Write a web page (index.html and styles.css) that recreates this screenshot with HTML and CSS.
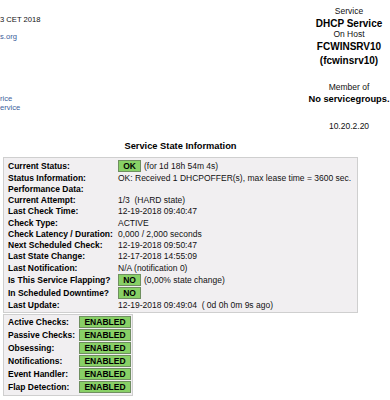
FILE: index.html
```html
<!DOCTYPE html>
<html>
<head>
<meta charset="utf-8">
<link rel="stylesheet" href="styles.css">
</head>
<body>
<div class="top">
  <div class="info">
    <div class="info-date">3 CET 2018</div>
    <div class="info-link link">s.org</div>
    <div class="info-links">
      <div class="link">rice</div>
      <div class="link">ervice</div>
    </div>
  </div>
  <div class="host">
    <div class="line">Service</div>
    <div class="line title">DHCP Service</div>
    <div class="line">On Host</div>
    <div class="line title">FCWINSRV10</div>
    <div class="line title alias">(fcwinsrv10)</div>
    <div class="line member">Member of</div>
    <div class="line sub">No servicegroups.</div>
    <div class="line addr">10.20.2.20</div>
  </div>
</div>

<div class="state">
  <div class="state-title">Service State Information</div>
  <div class="box main">
    <div class="row b"><span class="lbl">Current Status:</span><span class="val"><span class="badge">OK</span><span class="after">(for 1d 18h 54m 4s)</span></span></div>
    <div class="row"><span class="lbl">Status Information:</span><span class="val">OK: Received 1 DHCPOFFER(s), max lease time = 3600 sec.</span></div>
    <div class="row"><span class="lbl">Performance Data:</span><span class="val"></span></div>
    <div class="row"><span class="lbl">Current Attempt:</span><span class="val">1/3&nbsp;&nbsp;(HARD state)</span></div>
    <div class="row"><span class="lbl">Last Check Time:</span><span class="val">12-19-2018 09:40:47</span></div>
    <div class="row"><span class="lbl">Check Type:</span><span class="val">ACTIVE</span></div>
    <div class="row"><span class="lbl">Check Latency / Duration:</span><span class="val">0,000&nbsp;/&nbsp;2,000 seconds</span></div>
    <div class="row"><span class="lbl">Next Scheduled Check:&nbsp;&nbsp;</span><span class="val">12-19-2018 09:50:47</span></div>
    <div class="row"><span class="lbl">Last State Change:</span><span class="val">12-17-2018 14:55:09</span></div>
    <div class="row"><span class="lbl">Last Notification:</span><span class="val">N/A (notification 0)</span></div>
    <div class="row b"><span class="lbl">Is This Service Flapping?</span><span class="val"><span class="badge">NO</span><span class="after">(0,00% state change)</span></span></div>
    <div class="row b"><span class="lbl">In Scheduled Downtime?</span><span class="val"><span class="badge">NO</span></span></div>
    <div class="row"><span class="lbl">Last Update:</span><span class="val">12-19-2018 09:49:04&nbsp;&nbsp;( 0d 0h 0m 9s ago)</span></div>
  </div>
  <div class="box checks">
    <div class="row b"><span class="lbl">Active Checks:</span><span class="val"><span class="badge wide">ENABLED</span></span></div>
    <div class="row b"><span class="lbl">Passive Checks:</span><span class="val"><span class="badge wide">ENABLED</span></span></div>
    <div class="row b"><span class="lbl">Obsessing:</span><span class="val"><span class="badge wide">ENABLED</span></span></div>
    <div class="row b"><span class="lbl">Notifications:</span><span class="val"><span class="badge wide">ENABLED</span></span></div>
    <div class="row b"><span class="lbl">Event Handler:</span><span class="val"><span class="badge wide">ENABLED</span></span></div>
    <div class="row b"><span class="lbl">Flap Detection:</span><span class="val"><span class="badge wide">ENABLED</span></span></div>
  </div>
</div>
</body>
</html>
```
FILE: styles.css
```css
html, body {
  margin: 0;
  padding: 0;
  background: #ffffff;
}
body {
  font-family: "Liberation Sans", Arial, sans-serif;
  color: #000;
  width: 390px;
  height: 400px;
  overflow: hidden;
}
.top {
  display: flex;
  justify-content: space-between;
  height: 138px;
}
.info {
  font-size: 7.6px;
  color: #111;
  padding-top: 15px;
}
.info-date {
  line-height: 10px;
}
.link {
  color: #3b5e9c;
}
.info-link {
  margin-top: 7px;
  line-height: 10px;
}
.info-links {
  margin-top: 53px;
  line-height: 8.7px;
}
.host {
  width: 82px;
  text-align: center;
  white-space: nowrap;
  font-size: 8.5px;
  color: #111;
  padding-top: 6px;
}
.host .line {
  line-height: 11.5px;
}
.host .title {
  font-size: 10px;
  font-weight: bold;
  color: #000;
}
.host .alias {
  margin-top: 3px;
}
.host .member {
  margin-top: 15px;
}
.host .sub {
  font-size: 9.3px;
  font-weight: bold;
  color: #000;
  margin-top: 1px;
}
.host .addr {
  margin-top: 15px;
}
.state {
  padding-left: 3px;
}
.state-title {
  width: 355px;
  text-align: center;
  font-size: 9.3px;
  font-weight: bold;
  line-height: 12px;
  padding-top: 2px;
  margin-bottom: 5px;
}
.box {
  display: inline-flex;
  flex-direction: column;
  background: #f1eff1;
  border: 1px solid #cfcfcf;
  padding: 1px 0 1px 4px;
  font-size: 8.5px;
  box-sizing: border-box;
}
.main {
  width: 355px;
  display: flex;
}
.checks {
  width: 130px;
  display: flex;
  margin-top: 1px;
}
.row {
  display: flex;
  align-items: center;
  height: 11.25px;
  white-space: nowrap;
}
.row.b {
  height: 13px;
}
.lbl {
  font-weight: bold;
  color: #000;
  width: 110px;
  flex: none;
}
.checks .lbl {
  width: 71px;
}
.val {
  color: #111;
  display: flex;
  align-items: center;
}
.badge {
  display: inline-block;
  background: #88d066;
  border: 1px solid #6f8f60;
  font-weight: bold;
  color: #000;
  height: 10px;
  line-height: 10px;
  width: 21px;
  text-align: center;
}
.badge.wide {
  width: 50px;
}
.after {
  margin-left: 3px;
}
```
